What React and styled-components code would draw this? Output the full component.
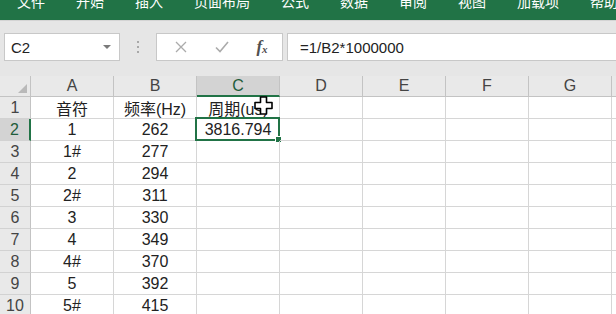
import React from 'react';
import styled, { createGlobalStyle } from 'styled-components';

const GlobalStyle = createGlobalStyle`
  body {
    margin: 0;
    overflow: hidden;
    background: #ffffff;
    font-family: "Liberation Sans", "Noto Sans CJK SC", sans-serif;
  }
`;

const Page = styled.div`
  width: 616px;
  height: 314px;
  overflow: hidden;
  background: #ffffff;
`;

const Ribbon = styled.div`
  height: 20px;
  background: #217346;
  border-bottom: 1px solid #d4d4d4;
  display: flex;
  align-items: flex-start;
  gap: 31px;
  padding-left: 17px;
  overflow: hidden;
`;

const Tab = styled.span`
  margin-top: -6px;
  font-family: "Noto Sans CJK SC", sans-serif;
  font-size: 14px;
  line-height: 15px;
  color: #ffffff;
  white-space: nowrap;
`;

const FormulaBar = styled.div`
  height: 55px;
  box-sizing: border-box;
  background: #e6e6e6;
  padding-top: 12px;
  display: flex;
  align-items: flex-start;
`;

const Box = styled.div`
  height: 28px;
  box-sizing: border-box;
  background: #ffffff;
  border: 1px solid #c8c8c8;
  display: flex;
  align-items: center;
`;

const NameBox = styled(Box)`
  margin-left: 4px;
  width: 116px;
  padding: 0 8px 0 6px;
  justify-content: space-between;
  font-size: 15px;
  color: #222;
`;

const DropArrow = styled.span`
  width: 0;
  height: 0;
  border-left: 4px solid transparent;
  border-right: 4px solid transparent;
  border-top: 4px solid #7a7a7a;
`;

const Grip = styled.div`
  width: 36px;
  height: 28px;
  display: flex;
  flex-direction: column;
  align-items: center;
  justify-content: center;
  gap: 3px;
`;

const GripDot = styled.span`
  width: 2px;
  height: 2px;
  background: #a8a8a8;
`;

const FxBox = styled(Box)`
  width: 127px;
  justify-content: space-between;
  padding: 0 4px 0 8px;
`;

const IconSlot = styled.span`
  width: 32px;
  display: flex;
  justify-content: center;
  align-items: center;
`;

const FxText = styled.span`
  font-family: "Liberation Serif", serif;
  font-style: italic;
  font-weight: bold;
  font-size: 17px;
  color: #505050;
  & sub {
    font-size: 11px;
    vertical-align: -1px;
  }
`;

const FormulaInput = styled(Box)`
  margin-left: 4px;
  flex: 1;
  margin-right: -2px;
  padding-left: 12px;
  font-size: 15px;
  color: #222;
`;

const Sheet = styled.div`
  position: relative;
  display: grid;
  grid-template-columns: 31px repeat(8, 83px);
  grid-template-rows: 21px repeat(10, 22px);
  font-size: 16px;
  color: #222;
`;

const HeadBase = styled.div`
  box-sizing: border-box;
  display: flex;
  align-items: center;
  justify-content: center;
  color: ${(p) => (p.$active ? '#1f5c3a' : '#444')};
  background: ${(p) => (p.$active ? '#d3d3d3' : '#e9e9e9')};
`;

const Corner = styled(HeadBase)`
  position: relative;
  border-right: 1px solid #c3c3c3;
  border-bottom: 1px solid #c3c3c3;
`;

const CornerMark = styled.span`
  position: absolute;
  right: 3px;
  bottom: 3px;
  width: 0;
  height: 0;
  border-left: 9px solid transparent;
  border-bottom: 9px solid #b9b9b9;
`;

const ColHead = styled(HeadBase)`
  border-right: 1px solid #c3c3c3;
  border-bottom: ${(p) => (p.$active ? '2px solid #217346' : '1px solid #c3c3c3')};
`;

const RowHead = styled(HeadBase)`
  border-right: ${(p) => (p.$active ? '2px solid #217346' : '1px solid #c3c3c3')};
  border-bottom: 1px solid #d2d2d2;
`;

const Cell = styled.div`
  position: relative;
  box-sizing: border-box;
  border-right: 1px solid #d6d6d6;
  border-bottom: 1px solid #d6d6d6;
  display: flex;
  align-items: center;
  justify-content: center;
  white-space: nowrap;
  font-family: "Liberation Sans", "Noto Sans CJK SC", sans-serif;
`;

const Selection = styled.div`
  position: absolute;
  left: -2px;
  top: -2px;
  right: -1px;
  bottom: -1px;
  border: 2px solid #217346;
  pointer-events: none;
`;

const FillHandle = styled.span`
  position: absolute;
  right: -4px;
  bottom: -4px;
  width: 5px;
  height: 5px;
  background: #217346;
  border: 1px solid #ffffff;
`;

const Cursor = styled.svg`
  position: absolute;
  left: 254px;
  top: 20px;
`;

const tabs = ['文件', '开始', '插入', '页面布局', '公式', '数据', '审阅', '视图', '加载项', '帮助'];
const cols = ['A', 'B', 'C', 'D', 'E', 'F', 'G', 'H'];
const rows = [
  ['音符', '频率(Hz)', '周期(us)'],
  ['1', '262', '3816.794'],
  ['1#', '277', ''],
  ['2', '294', ''],
  ['2#', '311', ''],
  ['3', '330', ''],
  ['4', '349', ''],
  ['4#', '370', ''],
  ['5', '392', ''],
  ['5#', '415', ''],
];

export default function App() {
  return (
    <Page>
      <GlobalStyle />
      <Ribbon>
        {tabs.map((t) => (
          <Tab key={t}>{t}</Tab>
        ))}
      </Ribbon>
      <FormulaBar>
        <NameBox>
          <span>C2</span>
          <DropArrow />
        </NameBox>
        <Grip>
          <GripDot />
          <GripDot />
          <GripDot />
        </Grip>
        <FxBox>
          <IconSlot>
            <svg width="12" height="12" viewBox="0 0 12 12">
              <path d="M1 1 L11 11 M11 1 L1 11" stroke="#ababab" strokeWidth="1.3" fill="none" />
            </svg>
          </IconSlot>
          <IconSlot>
            <svg width="14" height="12" viewBox="0 0 14 12">
              <path d="M1 6.5 L5 10.5 L13 1" stroke="#ababab" strokeWidth="1.6" fill="none" />
            </svg>
          </IconSlot>
          <IconSlot>
            <FxText>
              f<sub>x</sub>
            </FxText>
          </IconSlot>
        </FxBox>
        <FormulaInput>=1/B2*1000000</FormulaInput>
      </FormulaBar>
      <Sheet>
        <Corner>
          <CornerMark />
        </Corner>
        {cols.map((c) => (
          <ColHead key={c} $active={c === 'C'}>
            {c}
          </ColHead>
        ))}
        {rows.map((r, i) => (
          <React.Fragment key={i}>
            <RowHead $active={i === 1}>{i + 1}</RowHead>
            {cols.map((c, j) => {
              const selected = i === 1 && c === 'C';
              return (
                <Cell key={c}>
                  {r[j] || ''}
                  {selected && (
                    <Selection>
                      <FillHandle />
                    </Selection>
                  )}
                </Cell>
              );
            })}
          </React.Fragment>
        ))}
        <Cursor width="19" height="19" viewBox="0 0 19 19">
          <path
            d="M6.5 1 H12.5 V6.5 H18 V12.5 H12.5 V18 H6.5 V12.5 H1 V6.5 H6.5 Z"
            fill="#ffffff"
            stroke="#000000"
            strokeWidth="1.6"
            strokeLinejoin="round"
          />
        </Cursor>
      </Sheet>
    </Page>
  );
}
